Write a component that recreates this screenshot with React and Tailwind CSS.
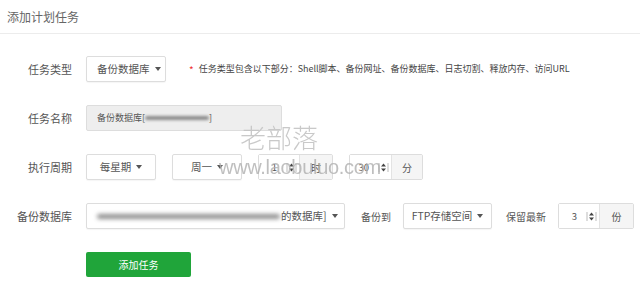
import React from 'react';

const font = { fontFamily: '"Noto Sans CJK SC", "Liberation Sans", sans-serif' };

function Caret() {
  return <span className="inline-block w-0 h-0 border-l-[3px] border-r-[3px] border-t-[4px] border-l-transparent border-r-transparent border-t-[#555] ml-[5px]" />;
}

function Spinner() {
  return (
    <svg width="11" height="11" viewBox="0 0 11 11" className="shrink-0">
      <path d="M1 1v9M10 1v9" stroke="#bbb" strokeWidth="1" />
      <path d="M3 4.5L5.5 1.5L8 4.5Z" fill="#444" />
      <path d="M3 6.5L5.5 9.5L8 6.5Z" fill="#444" />
    </svg>
  );
}

function Select({ className, children }) {
  return (
    <div className={'h-[26px] flex items-center border border-[#ddd] rounded-[2px] bg-white text-[10.5px] text-[#555] shadow-[0_1px_1px_rgba(0,0,0,0.04)] ' + className}>
      {children}
      <Caret />
    </div>
  );
}

function NumberBox({ value, unit, inputW, unitW }) {
  return (
    <div className="h-[26px] flex border border-[#ddd] rounded-[2px] text-[#555]">
      <div className={'flex items-center justify-end gap-[9px] pr-[2px] bg-white text-[9.5px] ' + inputW}>
        <span>{value}</span>
        <Spinner />
      </div>
      <div className={'flex items-center justify-center bg-[#f5f5f5] border-l border-[#e3e3e3] text-[10px] ' + unitW}>{unit}</div>
    </div>
  );
}

function Row({ label, children }) {
  return (
    <div className="flex items-center h-[26px]">
      <div className="w-[72px] text-right text-[11px] text-[#555] shrink-0">{label}</div>
      <div className="ml-[14px] flex items-center">{children}</div>
    </div>
  );
}

export default function App() {
  return (
    <div className="relative w-[640px] h-[292px] bg-white overflow-hidden" style={font}>
      <div className="h-[34px] border-b border-[#ececec] flex items-center pl-[7px] text-[12px] text-[#666]">
        添加计划任务
      </div>

      <div className="pt-[22px] flex flex-col gap-[23px]">
        <Row label="任务类型">
          <Select className="w-[80px] pl-[10px]">备份数据库</Select>
          <span className="ml-[23px] text-[10px] text-[#e33]">*</span>
          <span className="ml-[5px] text-[9px] text-[#444]">
            任务类型包含以下部分：Shell脚本、备份网址、备份数据库、日志切割、释放内存、访问URL
          </span>
        </Row>

        <Row label="任务名称">
          <div className="w-[196px] h-[26px] flex items-center pl-[10px] bg-[#eeeeee] border border-[#ddd] rounded-[2px] text-[9px] text-[#555]">
            备份数据库[
            <span className="inline-block w-[64px] h-[4px] bg-[#8a8a8a] blur-[1.5px] rounded-full" />
            ]
          </div>
        </Row>

        <Row label="执行周期">
          <Select className="w-[70px] justify-center">每星期</Select>
          <Select className="w-[70px] justify-center ml-[16px]">周一</Select>
          <div className="ml-[16px]">
            <NumberBox value="1" unit="时" inputW="w-[40px]" unitW="w-[33px]" />
          </div>
          <div className="ml-[16px]">
            <NumberBox value="30" unit="分" inputW="w-[41px]" unitW="w-[31px]" />
          </div>
        </Row>

        <Row label="备份数据库">
          <Select className="w-[259px] pl-[10px]">
            <span className="inline-block w-[183px] h-[5px] bg-[#8f8f8f] blur-[2px] rounded-full mr-[1px]" />
            的数据库]
          </Select>
          <span className="ml-[16px] text-[10px] text-[#555]">备份到</span>
          <Select className="w-[89px] justify-center ml-[12px]">FTP存储空间</Select>
          <span className="ml-[14px] text-[10px] text-[#555]">保留最新</span>
          <div className="ml-[12px]">
            <NumberBox value="3" unit="份" inputW="w-[40px]" unitW="w-[34px]" />
          </div>
        </Row>

        <div className="pl-[86px]">
          <button className="w-[105px] h-[25px] bg-[#20a53a] rounded-[2px] text-white text-[10px] flex items-center justify-center">
            添加任务
          </button>
        </div>
      </div>

      <div className="absolute left-[240px] top-[124px] text-[26px] leading-none font-light text-[#c4c4c4] opacity-90 pointer-events-none">
        老部落
      </div>
      <div
        className="absolute left-[219px] top-[157px] text-[20px] leading-none tracking-[-0.3px] text-[#b0b0b0] opacity-80 pointer-events-none"
        style={{ fontFamily: '"Liberation Sans", sans-serif' }}
      >
        www.laobuluo.com
      </div>
    </div>
  );
}
